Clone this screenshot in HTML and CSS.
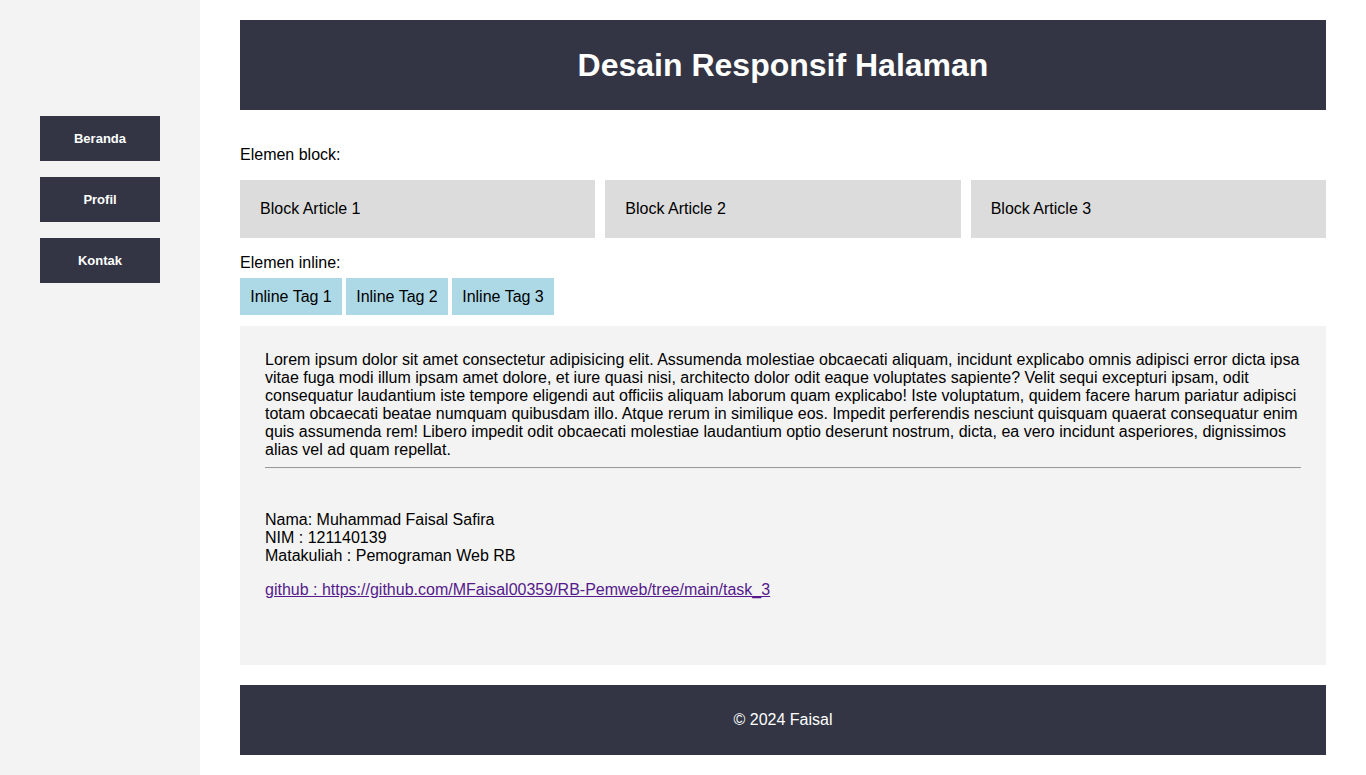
FILE: index.html
```html
<!DOCTYPE html>
<html lang="id">
<head>
<meta charset="utf-8">
<title>Desain Responsif Halaman</title>
<link rel="stylesheet" href="styles.css">
</head>
<body>
<div class="page">
  <aside class="sidebar">
    <a class="nav-btn" href="#">Beranda</a>
    <a class="nav-btn" href="#">Profil</a>
    <a class="nav-btn" href="#">Kontak</a>
  </aside>
  <main class="main">
    <header class="header"><h1>Desain Responsif Halaman</h1></header>
    <p class="label label-block">Elemen block:</p>
    <div class="blocks">
      <article class="block">Block Article 1</article>
      <article class="block">Block Article 2</article>
      <article class="block">Block Article 3</article>
    </div>
    <p class="label label-inline">Elemen inline:</p>
    <div class="tags">
      <span class="tag">Inline Tag 1</span>
      <span class="tag">Inline Tag 2</span>
      <span class="tag">Inline Tag 3</span>
    </div>
    <section class="content">
      <p class="lorem">Lorem ipsum dolor sit amet consectetur adipisicing elit. Assumenda molestiae obcaecati aliquam, incidunt explicabo omnis adipisci error dicta ipsa vitae fuga modi illum ipsam amet dolore, et iure quasi nisi, architecto dolor odit eaque voluptates sapiente? Velit sequi excepturi ipsam, odit consequatur laudantium iste tempore eligendi aut officiis aliquam laborum quam explicabo! Iste voluptatum, quidem facere harum pariatur adipisci totam obcaecati beatae numquam quibusdam illo. Atque rerum in similique eos. Impedit perferendis nesciunt quisquam quaerat consequatur enim quis assumenda rem! Libero impedit odit obcaecati molestiae laudantium optio deserunt nostrum, dicta, ea vero incidunt asperiores, dignissimos alias vel ad quam repellat.</p>
      <hr class="divider">
      <p class="info">Nama: Muhammad Faisal Safira<br>NIM : 121140139<br>Matakuliah : Pemograman Web RB</p>
      <p class="link-line"><a class="gh-link" href="#">github : https://github.com/MFaisal00359/RB-Pemweb/tree/main/task_3</a></p>
    </section>
    <footer class="footer">© 2024 Faisal</footer>
  </main>
</div>
</body>
</html>
```
FILE: styles.css
```css
* { box-sizing: border-box; }
html, body { margin: 0; padding: 0; }
body {
  font-family: "Liberation Sans", Arial, sans-serif;
  font-size: 16px;
  line-height: 18px;
  color: #000;
  background: #fff;
}
.page {
  display: flex;
  min-height: 775px;
}
.sidebar {
  width: 200px;
  flex: 0 0 200px;
  background: #f3f3f3;
  padding: 116px 40px 0;
  display: flex;
  flex-direction: column;
  gap: 16px;
}
.nav-btn {
  display: flex;
  align-items: center;
  justify-content: center;
  width: 120px;
  height: 45px;
  background: #333544;
  color: #fff;
  font-weight: bold;
  font-size: 13px;
  text-decoration: none;
}
.main {
  flex: 1;
  padding: 20px 40px;
  display: flex;
  flex-direction: column;
}
.header {
  background: #333544;
  height: 90px;
  display: flex;
  align-items: center;
  justify-content: center;
}
.header h1 {
  margin: 0;
  color: #fff;
  font-size: 32px;
  line-height: 37px;
  font-weight: bold;
}
.label { margin: 0; }
.label-block { margin-top: 36px; }
.label-inline { margin-top: 16px; }
.blocks {
  display: flex;
  gap: 10px;
  margin-top: 16px;
}
.block {
  flex: 1;
  background: #dcdcdc;
  padding: 20px;
}
.tags {
  display: flex;
  gap: 4px;
  margin-top: 6px;
}
.tag {
  background: #add8e6;
  padding: 10px 10px 9px;
  min-width: 102px;
  text-align: center;
}
.content {
  margin-top: 11px;
  background: #f3f3f3;
  padding: 25px 25px 66px;
}
.lorem { margin: 0; }
.divider {
  margin: 8px 0 0;
  border: 0;
  border-top: 1px solid #9a9a9a;
  border-bottom: 1px solid #eee;
  height: 0;
}
.info { margin: 42px 0 0; }
.link-line { margin: 16px 0 0; }
.gh-link { color: #551a8b; }
.footer {
  margin-top: 20px;
  background: #333544;
  color: #fff;
  height: 70px;
  display: flex;
  align-items: center;
  justify-content: center;
}
```
